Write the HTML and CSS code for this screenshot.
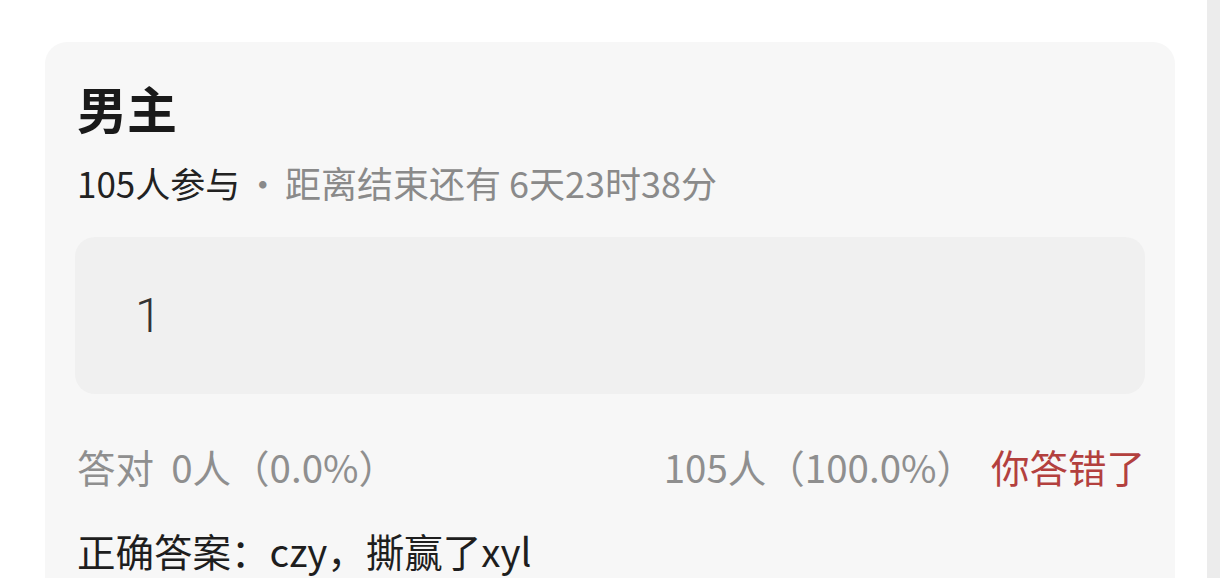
FILE: index.html
```html
<!DOCTYPE html>
<html lang="zh-CN">
<head>
  <meta charset="UTF-8">
  <meta name="viewport" content="width=device-width, initial-scale=1.0">
  <title>竞猜</title>
  <link rel="stylesheet" href="styles.css">
</head>
<body>
  <div class="page">
    <div class="main">
      <div class="quiz-card">
        <h1 class="quiz-title">男主</h1>
        <p class="quiz-meta">
          <span class="count">105人参与</span>
          <span class="dot">·</span>
          <span class="remain">距离结束还有 6天23时38分</span>
        </p>

        <div class="option">
          <span class="option-text">1</span>
        </div>

        <div class="stats">
          <span class="right-count">答对&nbsp;&nbsp;0人（0.0%）</span>
          <span class="wrong-count">105人（100.0%）<span class="wrong-tag">你答错了</span></span>
        </div>

        <p class="answer">正确答案：czy，撕赢了xyl</p>
      </div>
    </div>
    <div class="side-strip"></div>
  </div>
</body>
</html>
```

FILE: styles.css
```css
body {
  margin: 0;
  background-color: white;
  font-family: "Noto Sans CJK SC", "Noto Sans", sans-serif;
  overflow: hidden;
}

.page {
  display: flex;
  height: 578px;
}

.main {
  flex: 1;
  padding: 42px 0 0 45px;
}

.side-strip {
  width: 13px;
  background-color: #ececec;
}

.quiz-card {
  width: 1130px;
  box-sizing: border-box;
  height: 560px;
  padding: 35px 30px 0 32px;
  background-color: #f7f7f7;
  border-radius: 22px;
}

.quiz-title {
  margin: 0;
  font-size: 50px;
  line-height: 60px;
  font-weight: bold;
  color: #1a1a1a;
}

.quiz-meta {
  margin: 23px 0 0;
  font-size: 35px;
  line-height: 44px;
  color: #8a8a8a;
}

.quiz-meta .count {
  color: #222;
}

.quiz-meta .dot {
  margin: 0 -3px;
}

.quiz-meta .remain {
  font-size: 36px;
}

.option {
  margin-top: 32px;
  margin-left: -2px;
  height: 157px;
  display: flex;
  align-items: center;
  padding-left: 60px;
  background-color: #f0f0f0;
  border-radius: 20px;
}

.option-text {
  font-family: Roboto, "Noto Sans", sans-serif;
  font-size: 48px;
  font-weight: 300;
  color: #333;
}

.stats {
  margin-top: 50px;
  display: flex;
  justify-content: space-between;
  font-size: 38.5px;
  line-height: 44px;
  color: #8f8f8f;
}

.wrong-tag {
  margin-left: 16px;
  color: #b3403e;
}

.answer {
  margin: 40px 0 0;
  font-size: 38.5px;
  line-height: 44px;
  color: #1e1e1e;
}
```
